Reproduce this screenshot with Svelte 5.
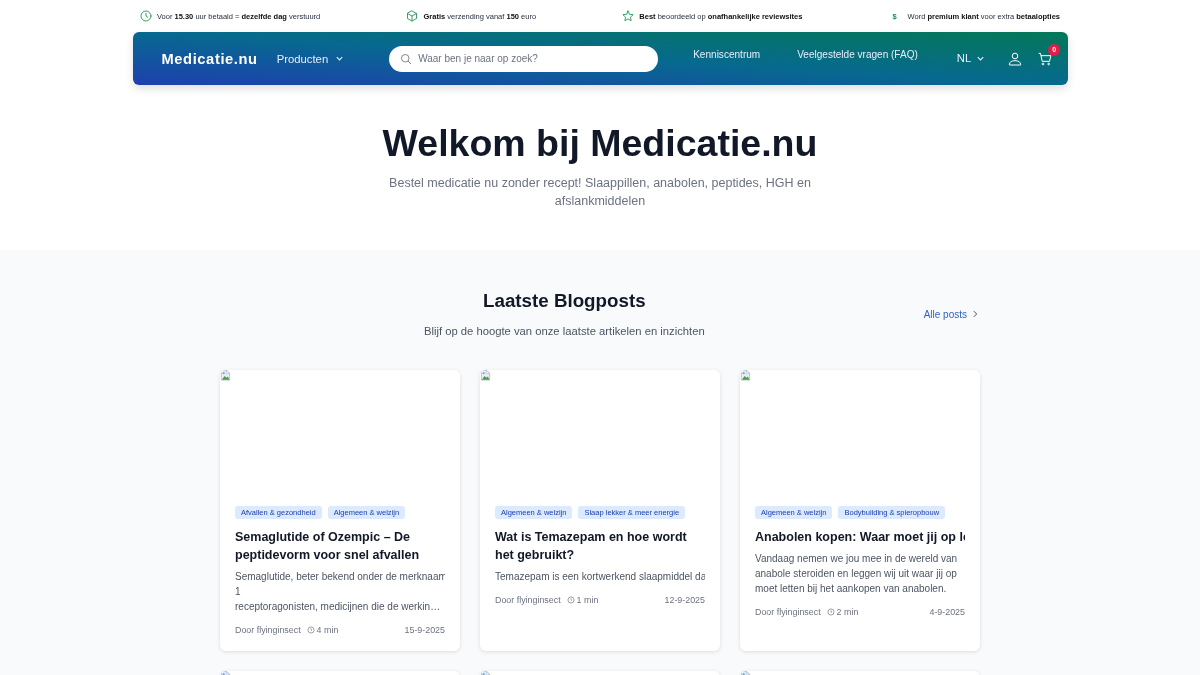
<script>
	const perks = [
		{ icon: 'clock', parts: [['Voor ', 0], ['15.30', 1], [' uur betaald = ', 0], ['dezelfde dag', 1], [' verstuurd', 0]] },
		{ icon: 'box', parts: [['Gratis', 1], [' verzending vanaf ', 0], ['150', 1], [' euro', 0]] },
		{ icon: 'star', parts: [['Best', 1], [' beoordeeld op ', 0], ['onafhankelijke reviewsites', 1]] },
		{ icon: 'dollar', parts: [['Word ', 0], ['premium klant', 1], [' voor extra ', 0], ['betaalopties', 1]] }
	];

	const nb = (s) => s.replace(/ /g, '\u00a0');

	const posts = [
		{
			tags: ['Afvallen & gezondheid', 'Algemeen & welzijn'],
			title: 'Semaglutide of Ozempic – De peptidevorm voor snel afvallen',
			text: nb('Semaglutide, beter bekend onder de merknaam Ozempic, behoort tot de GLP-') + ' 1 ' + nb('receptoragonisten, medicijnen die de werking van het hormoon nabootsen') + ' en de eetlust remmen',
			min: 4,
			date: '15-9-2025'
		},
		{
			tags: ['Algemeen & welzijn', 'Slaap lekker & meer energie'],
			title: 'Wat is Temazepam en hoe wordt het gebruikt?',
			text: nb('Temazepam is een kortwerkend slaapmiddel dat vaak wordt voorgeschreven'),
			min: 1,
			date: '12-9-2025'
		},
		{
			tags: ['Algemeen & welzijn', 'Bodybuilding & spieropbouw'],
			title: nb('Anabolen kopen: Waar moet jij op letten bij het kopen'),
			text: 'Vandaag nemen we jou mee in de wereld van anabole steroiden en leggen wij uit waar jij op moet letten bij het aankopen van anabolen.',
			min: 2,
			date: '4-9-2025'
		}
	];
</script>

{#snippet broken()}
	<svg class="broken" viewBox="0 0 12 12" aria-hidden="true">
		<path d="M1.5 .5h6l3 3v7.5h-9z" fill="#e8eef7" stroke="#a9b4c2" stroke-width=".8" />
		<path d="M2 10.5l3-4 2 2 1.500-1.500 2 3.500z" fill="#4f9a45" />
		<circle cx="4" cy="3.500" r="1.200" fill="#7fa6e0" />
		<path d="M7 .5l3.500 3.500H7z" fill="#fff" stroke="#a9b4c2" stroke-width=".6" />
	</svg>
{/snippet}

<div class="page">
	<div class="perks">
		{#each perks as perk}
			<div class="perk">
				{#if perk.icon === 'clock'}
					<svg class="perk-icon" viewBox="0 0 24 24"><circle cx="12" cy="12" r="10" /><path d="M12 6.500V12l3.500 2.500" /></svg>
				{:else if perk.icon === 'box'}
					<svg class="perk-icon" viewBox="0 0 24 24"><path d="M12 2l9 5v10l-9 5-9-5V7z" /><path d="M3.500 7.300L12 12l8.500-4.700M12 12v10" /></svg>
				{:else if perk.icon === 'star'}
					<svg class="perk-icon" viewBox="0 0 24 24"><path d="M12 2l3 6.500 7.200.9-5.300 4.900 1.400 7.100-6.300-3.500-6.300 3.500 1.400-7.100L1.800 9.400 9 8.500z" /></svg>
				{:else}
					<span class="dollar">$</span>
				{/if}
				<span>{#each perk.parts as [t, strong]}{#if strong}<b>{t}</b>{:else}{t}{/if}{/each}</span>
			</div>
		{/each}
	</div>

	<header class="nav">
		<span class="logo">Medicatie.nu</span>
		<span class="products">Producten
			<svg class="chev" viewBox="0 0 12 12"><path d="M3 4.500L6 7.500l3-3" /></svg>
		</span>
		<div class="search">
			<svg viewBox="0 0 24 24"><circle cx="10.500" cy="10.500" r="7.500" /><path d="M16 16l6 6" /></svg>
			<span>Waar ben je naar op zoek?</span>
		</div>
		<nav class="links">
			<span>Kenniscentrum</span>
			<span>Veelgestelde vragen (FAQ)</span>
		</nav>
		<div class="tools">
			<span class="lang">NL
				<svg class="chev" viewBox="0 0 12 12"><path d="M3 4.500L6 7.500l3-3" /></svg>
			</span>
			<svg class="tool" viewBox="0 0 24 24"><circle cx="12" cy="7.500" r="4.200" /><path d="M3.500 20.500c0-4 3.500-6 8.500-6s8.500 2 8.500 6v.5h-17z" /></svg>
			<span class="cart">
				<svg class="tool" viewBox="0 0 24 24"><path d="M2.500 3.500h2.700l2.600 12h11l2-8.500H6" /><circle cx="9" cy="19.500" r="1.300" /><circle cx="17.500" cy="19.500" r="1.300" /></svg>
				<span class="badge">0</span>
			</span>
		</div>
	</header>

	<section class="hero">
		<h1>Welkom bij Medicatie.nu</h1>
		<p>Bestel medicatie nu zonder recept! Slaappillen, anabolen, peptides, HGH en afslankmiddelen</p>
	</section>

	<section class="blog">
		<div class="blog-head">
			<div class="blog-title">
				<h2>Laatste Blogposts</h2>
				<p>Blijf op de hoogte van onze laatste artikelen en inzichten</p>
			</div>
			<span class="all">Alle posts
				<svg viewBox="0 0 12 12"><path d="M4.500 2.500L8 6l-3.500 3.500" /></svg>
			</span>
		</div>

		<div class="grid">
			{#each posts as post}
				<article class="card">
					<div class="thumb">{@render broken()}</div>
					<div class="body">
						<div class="clip">
							<div class="tags">
								{#each post.tags as tag}<span class="tag">{tag}</span>{/each}
							</div>
							<h3>{post.title}</h3>
							<p class="text">{post.text}</p>
							<div class="meta">
								<span>Door flyinginsect</span>
								<span class="time">
									<svg viewBox="0 0 12 12"><circle cx="6" cy="6" r="3.700" /><path d="M6 4v2l1.200.8" /></svg>
									{post.min} min
								</span>
								<span class="date">{post.date}</span>
							</div>
						</div>
					</div>
				</article>
			{/each}
			{#each posts as _}
				<article class="card"><div class="thumb">{@render broken()}</div></article>
			{/each}
		</div>
	</section>
</div>

<style>
	:global(body) {
		margin: 0;
		background: #fff;
	}
	* {
		box-sizing: border-box;
	}
	.page {
		height: 675px;
		overflow: hidden;
		will-change: transform;
		font-family: 'Liberation Sans', Arial, sans-serif;
		color: #111827;
	}
	.perks {
		display: flex;
		justify-content: space-between;
		align-items: center;
		width: 920px;
		height: 32px;
		margin: 0 auto;
		font-size: 7.500px;
		color: #1f2937;
	}
	.perk {
		display: flex;
		align-items: center;
		gap: 5px;
	}
	.perk b {
		color: #111;
	}
	.perk-icon {
		width: 12px;
		height: 12px;
		fill: none;
		stroke: #15914f;
		stroke-width: 1.700;
		stroke-linejoin: round;
		stroke-linecap: round;
	}
	.dollar {
		width: 12px;
		text-align: center;
		color: #15914f;
		font-weight: 700;
		margin-right: 2px;
	}
	.nav {
		display: flex;
		align-items: center;
		width: 935px;
		height: 53px;
		margin: 0 auto;
		padding: 0 14px 0 29px;
		border-radius: 6px;
		background: linear-gradient(to top right, #1e40af, #07698f 50%, #047857);
		box-shadow: 0 4px 8px rgba(0, 0, 0, 0.12);
		color: #fff;
	}
	.logo {
		font-size: 14.700px;
		font-weight: 700;
		letter-spacing: 0.6px;
	}
	.products,
	.lang {
		display: flex;
		align-items: center;
		font-size: 11.300px;
		color: #e7eefb;
	}
	.products {
		margin-left: 19px;
		gap: 6px;
	}
	.chev {
		width: 11px;
		height: 11px;
		fill: none;
		stroke: currentColor;
		stroke-width: 1.200;
	}
	.search {
		display: flex;
		flex: none;
		align-items: center;
		gap: 6px;
		width: 269px;
		height: 26px;
		margin-left: 44px;
		padding: 0 11px;
		border-radius: 13px;
		background: #fff;
		color: #6b7280;
		font-size: 10px;
	}
	.search svg {
		width: 12px;
		height: 12px;
		fill: none;
		stroke: #6b7280;
		stroke-width: 1.700;
	}
	.links {
		display: flex;
		gap: 37px;
		margin-left: 35px;
		padding-bottom: 9px;
		font-size: 10.050px;
		white-space: nowrap;
		color: #e7eefb;
	}
	.tools {
		display: flex;
		align-items: center;
		gap: 14px;
		margin-left: 39px;
	}
	.lang {
		gap: 4px;
		margin-right: 7px;
		padding-bottom: 1px;
	}
	.tool {
		display: block;
		width: 16px;
		height: 16px;
		fill: none;
		stroke: #fff;
		stroke-width: 1.500;
		stroke-linejoin: round;
	}
	.cart {
		position: relative;
	}
	.badge {
		position: absolute;
		top: -7px;
		right: -7px;
		width: 12px;
		height: 12px;
		border-radius: 50%;
		background: #e11d48;
		color: #fff;
		font-size: 7px;
		font-weight: 700;
		line-height: 12px;
		text-align: center;
	}
	.hero {
		height: 165px;
		padding-top: 35px;
		text-align: center;
	}
	.hero h1 {
		margin: 0;
		font-size: 37.500px;
		line-height: 47px;
		color: #111827;
	}
	.hero p {
		width: 440px;
		margin: 8px auto 0;
		font-size: 12.500px;
		line-height: 17.500px;
		color: #6b7280;
	}
	.blog {
		height: 425px;
		background: #f9fafb;
		padding-top: 38px;
	}
	.blog-head {
		display: flex;
		align-items: center;
		gap: 15px;
		width: 760px;
		margin: 0 auto;
	}
	.blog-title {
		flex: 1;
		text-align: center;
	}
	.blog-title h2 {
		margin: 0;
		font-size: 18.750px;
		line-height: 25px;
	}
	.blog-title p {
		margin: 10px 0 0;
		font-size: 11.250px;
		line-height: 16px;
		color: #4b5563;
	}
	.all {
		display: flex;
		align-items: center;
		gap: 3px;
		padding-top: 1px;
		font-size: 10px;
		color: #2f62c4;
	}
	.all svg {
		width: 10px;
		height: 10px;
		fill: none;
		stroke: #4b5563;
		stroke-width: 1.200;
	}
	.grid {
		display: grid;
		grid-template-columns: repeat(3, 240px);
		grid-auto-rows: 281px;
		gap: 20px;
		justify-content: center;
		margin-top: 31px;
	}
	.card {
		border-radius: 6px;
		background: #fff;
		box-shadow: 0 1px 4px rgba(0, 0, 0, 0.12);
		overflow: hidden;
	}
	.thumb {
		height: 120px;
	}
	.broken {
		display: block;
		width: 11px;
		height: 11px;
	}
	.body {
		padding: 16px 15px 15px;
	}
	.clip {
		overflow: hidden;
	}
	.tags {
		display: flex;
		gap: 6px;
	}
	.tag {
		padding: 2px 6px;
		border-radius: 3px;
		background: #dbeafe;
		color: #1e40af;
		font-size: 7.500px;
		line-height: 9px;
	}
	.card h3 {
		margin: 9px 0 0;
		font-size: 12.500px;
		line-height: 18px;
		font-weight: 700;
		color: #111827;
	}
	.text {
		display: -webkit-box;
		-webkit-box-orient: vertical;
		-webkit-line-clamp: 3;
		overflow: hidden;
		margin: 5px 0 0;
		font-size: 10px;
		line-height: 15px;
		color: #4b5563;
	}
	.meta {
		display: flex;
		align-items: center;
		gap: 5px;
		margin-top: 9px;
		font-size: 8.900px;
		line-height: 14px;
		color: #6b7280;
	}
	.time {
		display: flex;
		align-items: center;
		gap: 1px;
	}
	.time svg {
		width: 10px;
		height: 10px;
		fill: none;
		stroke: currentColor;
		stroke-width: 0.800;
	}
	.date {
		margin-left: auto;
	}
</style>
